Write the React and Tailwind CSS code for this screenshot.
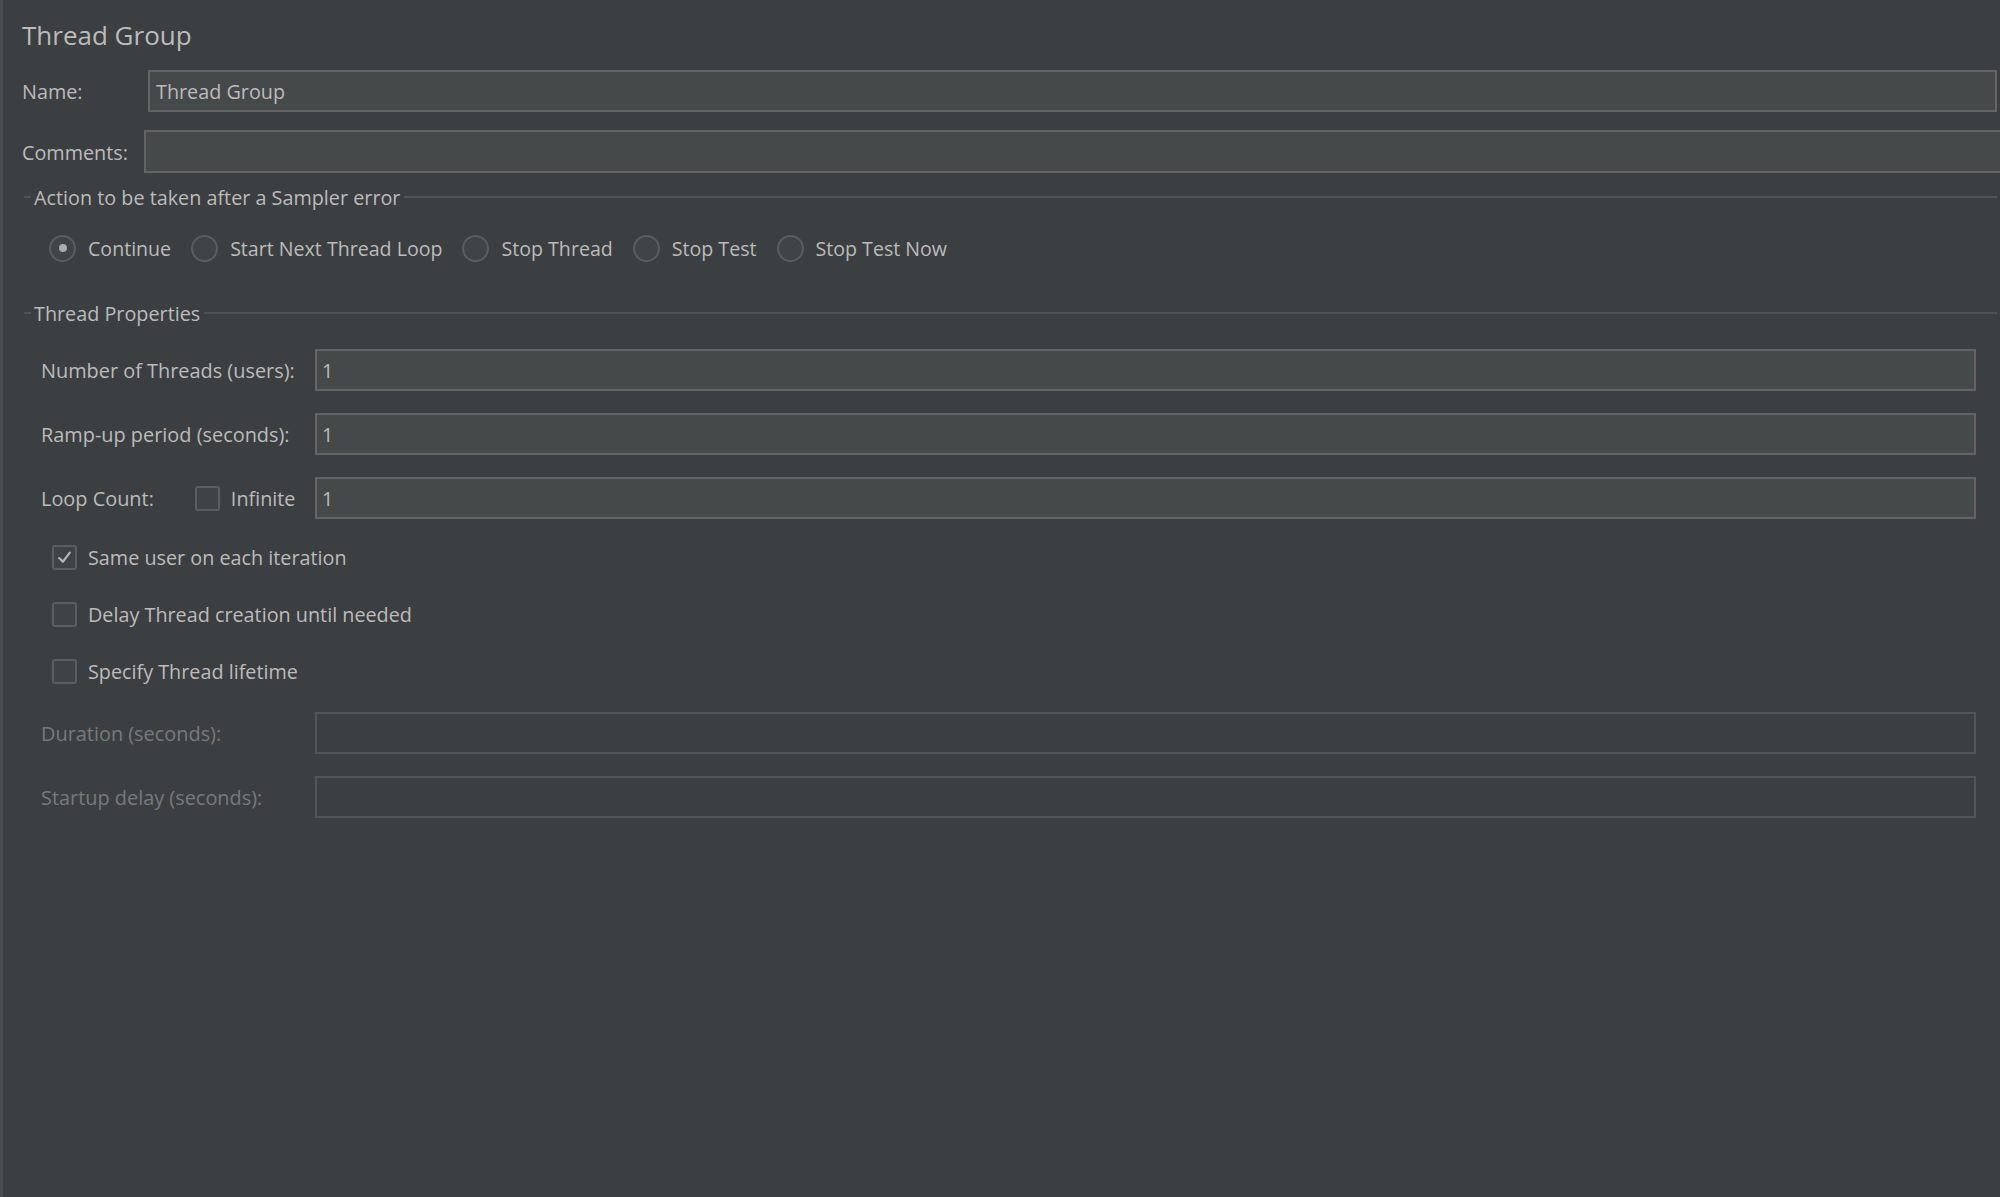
import React from "react";

const font = { fontFamily: '"Open Sans", "Noto Sans", sans-serif' };

function Radio({ checked, label }) {
  return (
    <div className="flex items-center">
      <div className="w-[27px] h-[27px] rounded-full border-2 border-[#5b5e60] bg-[#414446] flex items-center justify-center">
        {checked && <div className="w-[8px] h-[8px] rounded-full bg-[#a9abac]" />}
      </div>
      <span className="ml-[12px] text-[19.6px] text-[#bbbbbb] pt-[2px]">{label}</span>
    </div>
  );
}

function CheckBox({ checked }) {
  return (
    <div className="w-[25px] h-[25px] rounded-[3px] border-2 border-[#5b5e60] bg-[#3f4345] flex items-center justify-center shrink-0">
      {checked && (
        <svg width="17" height="17" viewBox="0 0 16 16" fill="none">
          <path d="M3 8.5 L6.5 12 L13 3.5" stroke="#b4b6b7" strokeWidth="2" strokeLinecap="round" strokeLinejoin="round" />
        </svg>
      )}
    </div>
  );
}

function GroupHeader({ title, mt }) {
  return (
    <div className={`flex items-center h-[24px] ${mt}`}>
      <div className="w-[7px] h-[2px] bg-[#505355] ml-[2px]" />
      <span className="ml-[3px] text-[19.8px] text-[#bbbbbb] leading-none pt-[2px]">{title}</span>
      <div className="flex-1 h-[2px] bg-[#505355] ml-[4px]" />
    </div>
  );
}

function InputRow({ label, value, disabled, mt, children }) {
  return (
    <div className={`flex items-center h-[42px] ${mt}`}>
      <div className="w-[293px] pl-[19px] flex items-center pt-[2px]">
        <span className={`text-[19.9px] ${disabled ? "text-[#777a7c]" : "text-[#bbbbbb]"}`}>{label}</span>
        {children}
      </div>
      <div
        className={`w-[1661px] h-[42px] border-2 flex items-center pl-[5px] pt-[2px] text-[19.8px] ${
          disabled ? "border-[#535658] bg-[#3c3f41]" : "border-[#646464] bg-[#45494a] text-[#bbbbbb]"
        }`}
      >
        {value}
      </div>
    </div>
  );
}

function CheckRow({ checked, label, mt }) {
  return (
    <div className={`flex items-center h-[30px] pl-[30px] ${mt}`}>
      <CheckBox checked={checked} />
      <span className="ml-[11px] text-[19.8px] text-[#bbbbbb] pt-[1px]">{label}</span>
    </div>
  );
}

export default function App() {
  return (
    <div
      className="w-[2000px] h-[1197px] bg-[#3c3f41] border-l-[3px] border-[#4b4e50] pl-[19px] pr-[3px] pt-[10px] overflow-hidden"
      style={font}
    >
      <div className="h-[50px] flex items-center text-[26px] text-[#bbbbbb]">Thread Group</div>

      <div className="flex items-center h-[42px] mt-[10px]">
        <span className="w-[126px] text-[19.8px] text-[#bbbbbb] pt-[2px]">Name:</span>
        <div className="flex-1 h-[42px] border-2 border-[#646464] bg-[#45494a] flex items-center pl-[6px] pt-[2px] text-[19.8px] text-[#bbbbbb]">
          Thread Group
        </div>
      </div>

      <div className="flex items-center h-[43px] mt-[18px] mr-[-6px]">
        <span className="w-[122px] text-[19.8px] text-[#bbbbbb] pt-[2px]">Comments:</span>
        <div className="flex-1 h-[43px] border-2 border-[#646464] bg-[#45494a]" />
      </div>

      <GroupHeader title="Action to be taken after a Sampler error" mt="mt-[12px]" />

      <div className="flex items-center h-[30px] mt-[24px] pl-[27px] gap-[20px]">
        <Radio checked label="Continue" />
        <Radio label="Start Next Thread Loop" />
        <Radio label="Stop Thread" />
        <Radio label="Stop Test" />
        <Radio label="Stop Test Now" />
      </div>

      <GroupHeader title="Thread Properties" mt="mt-[38px]" />

      <InputRow label="Number of Threads (users):" value="1" mt="mt-[24px]" />
      <InputRow label="Ramp-up period (seconds):" value="1" mt="mt-[22px]" />
      <InputRow label="Loop Count:" value="1" mt="mt-[22px]">
        <div className="ml-[41px] flex items-center">
          <CheckBox />
          <span className="ml-[11px] text-[19.8px] text-[#bbbbbb]">Infinite</span>
        </div>
      </InputRow>

      <CheckRow checked label="Same user on each iteration" mt="mt-[23px]" />
      <CheckRow label="Delay Thread creation until needed" mt="mt-[27px]" />
      <CheckRow label="Specify Thread lifetime" mt="mt-[27px]" />

      <InputRow label="Duration (seconds):" disabled mt="mt-[26px]" />
      <InputRow label="Startup delay (seconds):" disabled mt="mt-[22px]" />
    </div>
  );
}
